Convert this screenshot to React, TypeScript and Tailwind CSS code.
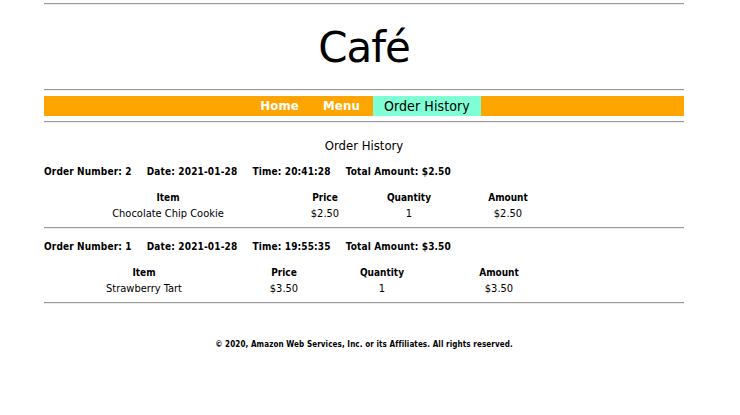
const orders = [
  {
    number: 2,
    date: "2021-01-28",
    time: "20:41:28",
    total: "$2.50",
    cols: "grid-cols-[248px_66px_102px_96px]",
    items: [{ name: "Chocolate Chip Cookie", price: "$2.50", qty: 1, amount: "$2.50" }],
  },
  {
    number: 1,
    date: "2021-01-28",
    time: "19:55:35",
    total: "$3.50",
    cols: "grid-cols-[200px_80px_116px_118px]",
    items: [{ name: "Strawberry Tart", price: "$3.50", qty: 1, amount: "$3.50" }],
  },
];

function Rule() {
  return <div className="border-t border-t-[#9a9a9a] border-b border-b-[#ececec]" />;
}

export default function App() {
  return (
    <div className="min-h-[415px] bg-white text-black font-['DejaVu_Sans_Condensed','DejaVu_Sans',sans-serif]">
      <div className="ml-[44px] w-[640px] pt-[3px]">
        <Rule />
        <h1 className="h-[84px] flex items-center justify-center text-[42px] font-['DejaVu_Sans',sans-serif] tracking-[-1px]">
          Café
        </h1>
        <Rule />
        <nav className="mt-[5px] h-[20px] bg-[#ffa500] flex justify-center text-[14px] leading-[20px]">
          <a className="pl-[13px] pr-[12px] text-white font-semibold text-[13px] tracking-[0.2px]">Home</a>
          <a className="pl-[12px] pr-[13px] text-white font-semibold text-[13px] tracking-[0.2px]">Menu</a>
          <a className="px-[11px] bg-[#7fffd4] text-black tracking-[0.1px]">Order History</a>
        </nav>
        <div className="mt-[5px]">
          <Rule />
        </div>
        <h2 className="mt-[14px] text-center text-[13px] leading-[18px]">Order History</h2>
        {orders.map((o, i) => (
          <div key={o.number}>
            <div className={`${i === 0 ? "mt-[9px]" : "mt-[10px]"} flex gap-[15px] text-[10px] font-bold leading-[16px] tracking-[0.15px]`}>
              <span>Order Number: {o.number}</span>
              <span>Date: {o.date}</span>
              <span>Time: {o.time}</span>
              <span>Total Amount: {o.total}</span>
            </div>
            <div className={`mt-[10px] grid ${o.cols} text-center leading-[16px]`}>
              <span className="font-bold text-[10px]">Item</span>
              <span className="font-bold text-[10px]">Price</span>
              <span className="font-bold text-[10px]">Quantity</span>
              <span className="font-bold text-[10px]">Amount</span>
              {o.items.map((it) => (
                <>
                  <span key={it.name} className="text-[11px]">{it.name}</span>
                  <span className="text-[11px]">{it.price}</span>
                  <span className="text-[11px]">{it.qty}</span>
                  <span className="text-[11px]">{it.amount}</span>
                </>
              ))}
            </div>
            <div className="mt-[5px]">
              <Rule />
            </div>
          </div>
        ))}
        <p className="mt-[35px] text-center text-[8px] font-bold tracking-[0.1px]">
          © 2020, Amazon Web Services, Inc. or its Affiliates. All rights reserved.
        </p>
      </div>
    </div>
  );
}
